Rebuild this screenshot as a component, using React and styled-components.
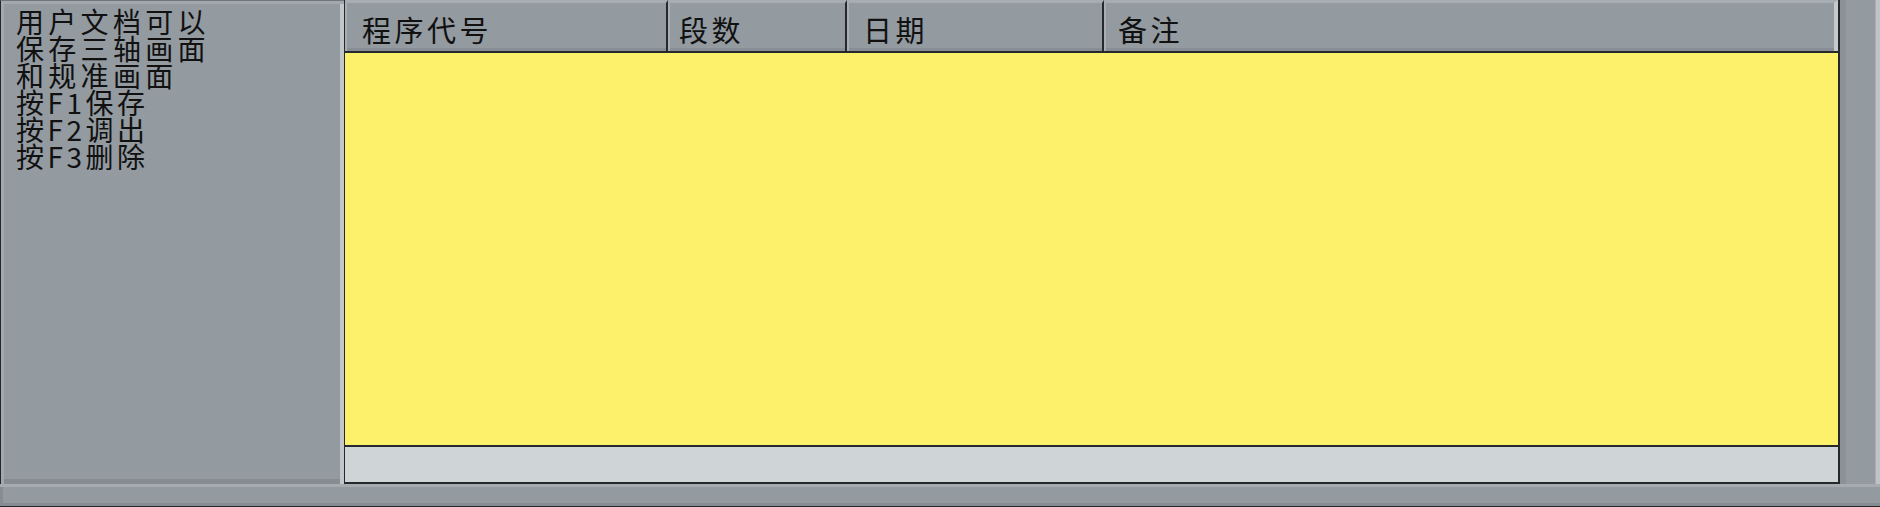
import styled, { createGlobalStyle } from 'styled-components'

const GlobalStyle = createGlobalStyle`
  html, body {
    margin: 0;
    padding: 0;
    background: #939aa0;
    overflow: hidden;
  }
`

const colors = {
  panel: '#939aa0',
  dark: '#25292c',
  yellow: '#fdf16b',
  strip: '#cfd4d7',
}

const Screen = styled.div`
  width: 1880px;
  height: 507px;
  display: flex;
  flex-direction: column;
  background: ${colors.panel};
  font-family: "Noto Sans CJK SC", "Noto Sans", sans-serif;
  color: #111;
`

const Main = styled.div`
  flex: 1;
  display: flex;
  min-height: 0;
`

const Sidebar = styled.div`
  width: 344px;
  box-sizing: border-box;
  border-left: 1px solid ${colors.dark};
  border-top: 1px solid #6f757a;
  box-shadow: inset 3px 3px 0 #a2a8ad, inset -4px 0 0 #c3c7ca, inset 0 -5px 0 #868c91;
  padding: 7px 0 0 15px;
`

const HelpLine = styled.div`
  font-size: 28px;
  line-height: 27px;
  letter-spacing: ${p => p.$spacing}px;
  white-space: nowrap;
`

const Table = styled.div`
  flex: 1;
  display: flex;
  flex-direction: column;
  border-left: 1px solid ${colors.dark};
  border-right: 2px solid ${colors.dark};
  border-bottom: 2px solid ${colors.dark};
`

const HeaderRow = styled.div`
  height: 51px;
  display: flex;
  border-bottom: 2px solid ${colors.dark};
`

const HeaderCell = styled.div`
  width: ${p => p.$width ? `${p.$width}px` : 'auto'};
  flex: ${p => p.$width ? 'none' : 1};
  box-sizing: border-box;
  display: flex;
  align-items: center;
  padding: 4px 0 0 ${p => p.$pad}px;
  background: ${colors.panel};
  border-top: 3px solid #a7adb1;
  border-left: 2px solid #a9aeb2;
  border-right: ${p => p.$last ? '4px solid #c6cacd' : `2px solid ${colors.dark}`};
  box-shadow: inset 0 -3px 0 #888e93;
  font-size: 29px;
  letter-spacing: 3.5px;
`

const Body = styled.div`
  flex: 1;
  background: ${colors.yellow};
  border-bottom: 2px solid ${colors.dark};
`

const FootStrip = styled.div`
  height: 35px;
  background: ${colors.strip};
`

const Rail = styled.div`
  width: 40px;
  box-shadow: inset 6px 0 0 #8b9196, inset -4px 0 0 #bfc3c6, inset -5px 0 0 #a9aeb2;
`

const BottomBar = styled.div`
  height: 23px;
  box-sizing: border-box;
  border-top: 3px solid #a6abaf;
  border-bottom: 1px solid ${colors.dark};
  box-shadow: inset 0 -3px 0 #858b90, inset 3px 0 0 #868c91;
`

const help = [
  { text: '用户文档可以', spacing: 4.3 },
  { text: '保存三轴画面', spacing: 4.3 },
  { text: '和规准画面', spacing: 4.3 },
  { text: '按F1保存', spacing: 3.5 },
  { text: '按F2调出', spacing: 3.5 },
  { text: '按F3删除', spacing: 3.5 },
]

const columns = [
  { title: '程序代号', width: 323, pad: 15 },
  { title: '段数', width: 179, pad: 9 },
  { title: '日期', width: 257, pad: 14 },
  { title: '备注', pad: 12, last: true },
]

function App() {
  return (
    <>
      <GlobalStyle />
      <Screen>
        <Main>
          <Sidebar>
            {help.map(line => (
              <HelpLine key={line.text} $spacing={line.spacing}>{line.text}</HelpLine>
            ))}
          </Sidebar>
          <Table>
            <HeaderRow>
              {columns.map(col => (
                <HeaderCell key={col.title} $width={col.width} $pad={col.pad} $last={col.last}>
                  {col.title}
                </HeaderCell>
              ))}
            </HeaderRow>
            <Body />
            <FootStrip />
          </Table>
          <Rail />
        </Main>
        <BottomBar />
      </Screen>
    </>
  )
}

export default App
